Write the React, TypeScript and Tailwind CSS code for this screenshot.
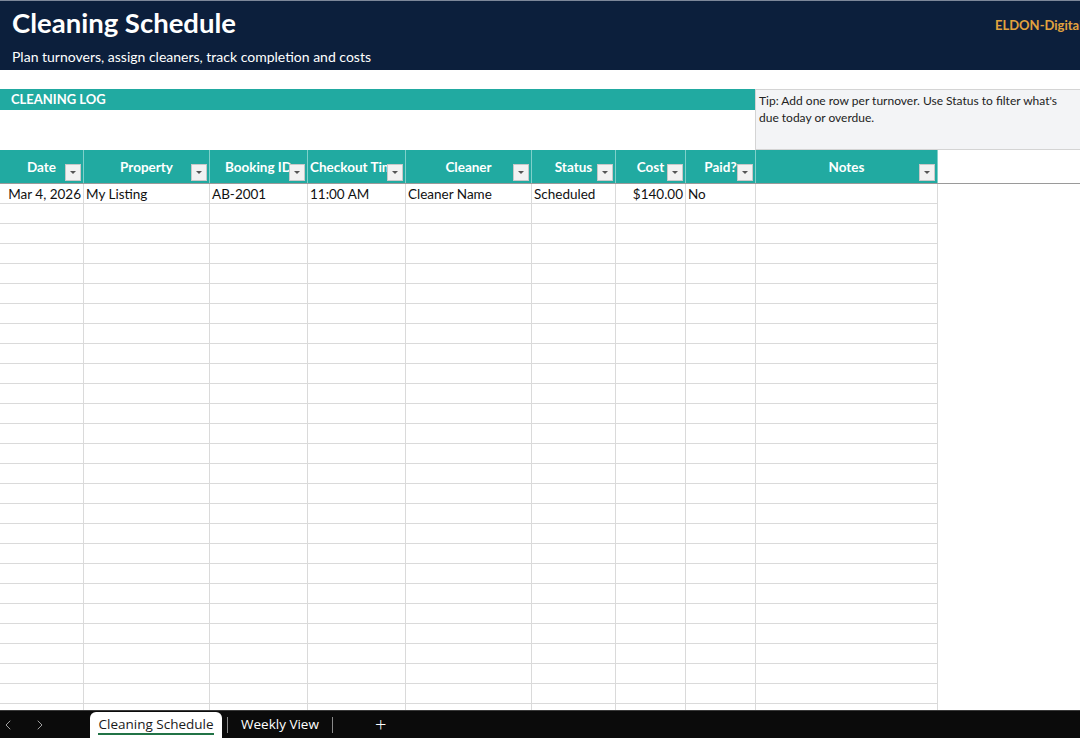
import React from "react";
import { ChevronLeft, ChevronRight } from "lucide-react";

const cols = [
  { name: "Date", w: "w-[84px]" },
  { name: "Property", w: "w-[126px]" },
  { name: "Booking ID", w: "w-[98px]" },
  { name: "Checkout Time", w: "w-[98px]" },
  { name: "Cleaner", w: "w-[126px]" },
  { name: "Status", w: "w-[84px]" },
  { name: "Cost", w: "w-[70px]" },
  { name: "Paid?", w: "w-[70px]" },
  { name: "Notes", w: "w-[182px]" },
];

const firstRow = ["Mar 4, 2026", "My Listing", "AB-2001", "11:00 AM", "Cleaner Name", "Scheduled", "$140.00", "No", ""];
const rightAlign = [true, false, false, false, false, false, true, false, false];

function FilterBtn() {
  return (
    <div className="absolute right-[2px] bottom-[2px] w-[16px] h-[17px] bg-[#f2f2f2] border border-[#c8c8c8] flex items-center justify-center">
      <svg width="8" height="5" viewBox="0 0 8 5">
        <polygon points="1,1 7,1 4,4" fill="#555" />
      </svg>
    </div>
  );
}

export default function App() {
  const emptyRows = Array.from({ length: 26 });
  return (
    <div className="w-[1080px] h-[738px] flex flex-col overflow-hidden bg-white" style={{ fontFamily: "Lato, 'Open Sans', sans-serif" }}>
      {/* Title band */}
      <div className="h-[70px] shrink-0 bg-[#0c1f3c] border-t border-[#7d8799] flex justify-between">
        <div className="flex flex-col pl-[12px]">
          <div className="text-white font-bold text-[27.5px] leading-[30px] mt-[7px]">Cleaning Schedule</div>
          <div className="text-white text-[14px] leading-[18px] mt-[10px]">Plan turnovers, assign cleaners, track completion and costs</div>
        </div>
        <div className="text-[#e2a33e] font-bold text-[13px] mt-[15px] whitespace-nowrap w-[85px]">ELDON-Digital</div>
      </div>
      <div className="h-[19px] shrink-0" />
      {/* Section + tip */}
      <div className="h-[61px] shrink-0 flex">
        <div className="w-[755px] shrink-0">
          <div className="h-[21px] bg-[#21aaa1] text-white font-bold text-[13px] leading-[21px] pl-[11px]">CLEANING LOG</div>
        </div>
        <div className="flex-1 bg-[#f3f4f6] border-t border-l border-b border-[#d4d4d4] pl-[3px] pr-[10px] pt-[2px] text-[12px] leading-[17px] text-[#222]">
          Tip: Add one row per turnover. Use Status to filter what's due today or overdue.
        </div>
      </div>
      {/* Header row */}
      <div className="h-[34px] shrink-0 flex border-b border-[#9a9a9a]">
        {cols.map((c) => (
          <div
            key={c.name}
            className={`${c.w} shrink-0 relative bg-[#21aaa1] border-r border-[#7fd0ca] flex items-center overflow-hidden pt-[1px] ${c.name === "Checkout Time" ? "justify-start pl-[2px]" : "justify-center"}`}
          >
            <span className="text-white font-bold text-[13.5px] whitespace-nowrap">{c.name}</span>
            <FilterBtn />
          </div>
        ))}
      </div>
      {/* Data rows */}
      <div className="flex-1 overflow-hidden">
        <div className="flex h-[20px]">
          {cols.map((c, i) => (
            <div
              key={c.name}
              className={`${c.w} shrink-0 border-r border-b border-[#dadada] text-[13.5px] leading-[19px] pt-[1px] text-[#111] px-[2px] whitespace-nowrap overflow-hidden ${rightAlign[i] ? "text-right" : "text-left"}`}
            >
              {firstRow[i]}
            </div>
          ))}
        </div>
        {emptyRows.map((_, r) => (
          <div key={r} className="flex h-[20px]">
            {cols.map((c) => (
              <div key={c.name} className={`${c.w} shrink-0 border-r border-b border-[#dadada]`} />
            ))}
          </div>
        ))}
      </div>
      {/* Sheet tabs */}
      <div className="h-[28px] shrink-0 bg-[#0b0b0b] border-t border-[#3a3a3a] flex items-stretch" style={{ fontFamily: "'Open Sans', Lato, sans-serif" }}>
        <div className="w-[90px] flex items-center text-[#a0a0a0]">
          <ChevronLeft size={16} strokeWidth={1.5} className="ml-[0px]" />
          <ChevronRight size={16} strokeWidth={1.5} className="ml-[16px]" />
        </div>
        <div className="w-[132px] mt-[1px] bg-white rounded-t-[6px] flex flex-col items-center justify-center">
          <span className="text-[#1a1a1a] leading-[18px] border-b-2 border-[#217346] text-[13.5px]">Cleaning Schedule</span>
        </div>
        <div className="flex items-center ml-[5px]">
          <div className="w-px h-[16px] bg-[#8a8a8a]" />
        </div>
        <div className="flex items-center text-white ml-[13px] text-[13.5px]">Weekly View</div>
        <div className="flex items-center ml-[13px]">
          <div className="w-px h-[16px] bg-[#8a8a8a]" />
        </div>
        <div className="flex items-center text-white ml-[42px] text-[20px] font-light">+</div>
      </div>
    </div>
  );
}
